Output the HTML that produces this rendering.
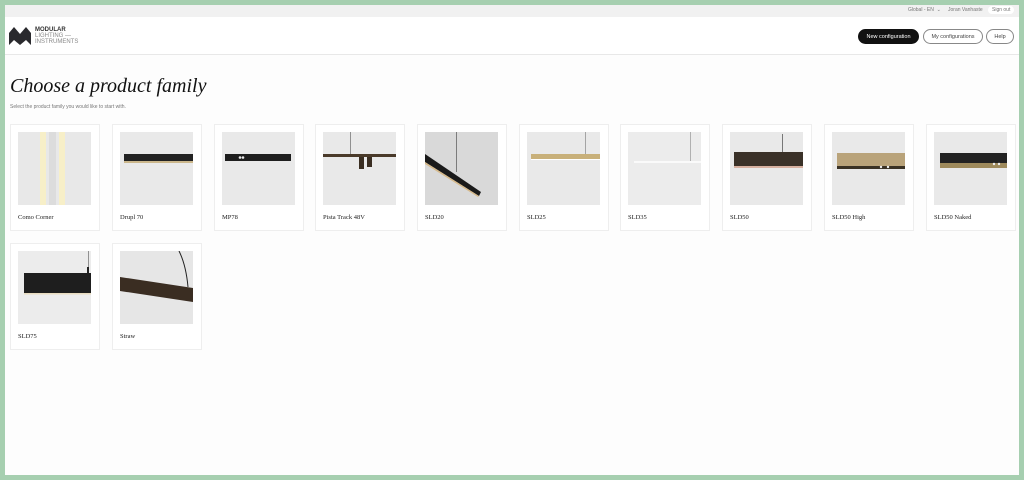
<!DOCTYPE html><html><head><style>
*{margin:0;padding:0;box-sizing:border-box}
body{width:1024px;height:480px;background:#a6cfb0;position:relative;overflow:hidden;font-family:"Liberation Sans",sans-serif}
#p{position:absolute;left:5px;top:5px;width:1014px;height:470px;background:#fdfdfd}
.top{position:absolute;left:0;top:0;width:1014px;height:12px;background:#f1f1f1;font-size:5px;color:#777}
.hdr{position:absolute;left:0;top:12px;width:1014px;height:38px;background:#fff;border-bottom:1px solid #e8e8e8}
.btn{position:absolute;top:12px;height:15px;border-radius:8px;font-size:5.5px;text-align:center;line-height:14px;border:1px solid #888;color:#444;background:#fff}
h1{position:absolute;left:5px;top:70px;font-family:"Liberation Serif",serif;font-style:italic;font-weight:normal;font-size:20px;color:#111}
.sub{position:absolute;left:5px;top:99px;font-size:5px;color:#777}
.c{position:absolute;width:90px;height:107px;background:#fff;border:1px solid #eee}
.c svg{position:absolute;left:7px;top:7px;width:73px;height:73px}
.c span{position:absolute;left:7px;top:89px;font-family:"Liberation Serif",serif;font-size:6.5px;color:#222}
</style></head><body><div id="p">
<div class="top"><span style="position:absolute;left:903px;top:2px">Global - EN &nbsp;⌄</span><span style="position:absolute;left:943px;top:2px">Joran Vanhaste</span><span style="position:absolute;left:983px;top:1px;background:#fff;border-radius:5px;padding:1px 4px">Sign out</span></div>
<div class="hdr">
<svg style="position:absolute;left:4px;top:10px" width="22" height="18" viewBox="0 0 22 18"><path d="M0 18V6L5 0l6 7 6-7 5 6v12l-5-5-6 5-6-5z" fill="#2a2a2e"/></svg>
<div style="position:absolute;left:30px;top:10px;font-size:6px;line-height:6px;color:#333"><b>MODULAR</b><br><span style="color:#888">LIGHTING —<br>INSTRUMENTS</span></div>
<div class="btn" style="left:853px;width:61px;background:#111;color:#fff;border-color:#111">New configuration</div>
<div class="btn" style="left:918px;width:60px">My configurations</div>
<div class="btn" style="left:981px;width:28px">Help</div>
</div>
<h1>Choose a product family</h1>
<div class="sub">Select the product family you would like to start with.</div>

<div class="c" style="left:5px;top:119px"><svg viewBox="0 0 73 73"><rect width="73" height="73" fill="#e8e8e8"/><rect x="22" width="6" height="73" fill="#f7efc8"/><rect x="41" width="6" height="73" fill="#f7efc8"/><rect x="31" width="7" height="73" fill="#dcdcdc"/></svg><span>Como Corner</span></div>
<div class="c" style="left:107px;top:119px"><svg viewBox="0 0 73 73"><rect width="73" height="73" fill="#e9e9e9"/><rect x="4" y="22" width="69" height="7" fill="#222"/><rect x="4" y="29" width="69" height="2" fill="#cbb78c"/></svg><span>Drupl 70</span></div>
<div class="c" style="left:209px;top:119px"><svg viewBox="0 0 73 73"><rect width="73" height="73" fill="#e9e9e9"/><rect x="3" y="22" width="66" height="7" fill="#1e1e1e"/><circle cx="18" cy="25.5" r="1.3" fill="#eee"/><circle cx="21" cy="25.5" r="1.3" fill="#eee"/></svg><span>MP78</span></div>
<div class="c" style="left:310px;top:119px"><svg viewBox="0 0 73 73"><rect width="73" height="73" fill="#e9e9e9"/><rect x="27" y="0" width=".6" height="22" fill="#555"/><rect x="0" y="22" width="73" height="3" fill="#4a3a2a"/><rect x="36" y="25" width="5" height="12" fill="#3a2e22"/><rect x="44" y="25" width="5" height="10" fill="#3a2e22"/></svg><span>Pista Track 48V</span></div>
<div class="c" style="left:412px;top:119px"><svg viewBox="0 0 73 73"><rect width="73" height="73" fill="#d9d9d9"/><rect x="31" width=".7" height="40" fill="#555"/><path d="M0 22L56 60 54 64 0 30z" fill="#1a1a1a"/><path d="M0 30L54 64 53 65 0 32z" fill="#d6b98a"/></svg><span>SLD20</span></div>
<div class="c" style="left:514px;top:119px"><svg viewBox="0 0 73 73"><rect width="73" height="73" fill="#e9e9e9"/><rect x="58" width=".6" height="22" fill="#777"/><rect x="4" y="22" width="69" height="5" fill="#c8b07a"/><rect x="4" y="27" width="69" height="1" fill="#fff"/></svg><span>SLD25</span></div>
<div class="c" style="left:615px;top:119px"><svg viewBox="0 0 73 73"><rect width="73" height="73" fill="#ececec"/><rect x="62" width=".6" height="30" fill="#888"/><rect x="6" y="29" width="67" height="2" fill="#fafafa"/></svg><span>SLD35</span></div>
<div class="c" style="left:717px;top:119px"><svg viewBox="0 0 73 73"><rect width="73" height="73" fill="#e9e9e9"/><rect x="52" y="2" width="1" height="18" fill="#777"/><rect x="4" y="20" width="69" height="14" fill="#3a3128"/><rect x="4" y="34" width="69" height="2" fill="#d6b0a0"/></svg><span>SLD50</span></div>
<div class="c" style="left:819px;top:119px"><svg viewBox="0 0 73 73"><rect width="73" height="73" fill="#e9e9e9"/><rect x="5" y="21" width="68" height="13" fill="#b9a37a"/><rect x="5" y="34" width="68" height="3" fill="#3a3225"/><circle cx="49" cy="35" r="1.2" fill="#eee"/><circle cx="56" cy="35" r="1.2" fill="#eee"/></svg><span>SLD50 High</span></div>
<div class="c" style="left:921px;top:119px"><svg viewBox="0 0 73 73"><rect width="73" height="73" fill="#e9e9e9"/><rect x="6" y="21" width="67" height="10" fill="#222"/><rect x="6" y="31" width="67" height="5" fill="#9e8a5c"/><circle cx="60" cy="32" r="1.2" fill="#eee"/><circle cx="65" cy="32" r="1.2" fill="#eee"/></svg><span>SLD50 Naked</span></div>

<div class="c" style="left:5px;top:238px"><svg viewBox="0 0 73 73"><rect width="73" height="73" fill="#ececec"/><rect x="70" y="0" width=".6" height="16" fill="#555"/><rect x="69" y="16" width="2" height="6" fill="#222"/><rect x="6" y="22" width="67" height="20" fill="#1e1e1e"/><rect x="6" y="42" width="67" height="1.5" fill="#e8dcc0"/></svg><span>SLD75</span></div>
<div class="c" style="left:107px;top:238px"><svg viewBox="0 0 73 73"><rect width="73" height="73" fill="#e6e6e6"/><path d="M59 0Q66 14 68 36" stroke="#222" stroke-width="1" fill="none"/><path d="M0 26L73 37 73 51 0 40z" fill="#3a2d22"/></svg><span>Straw</span></div>
</div></body></html>
